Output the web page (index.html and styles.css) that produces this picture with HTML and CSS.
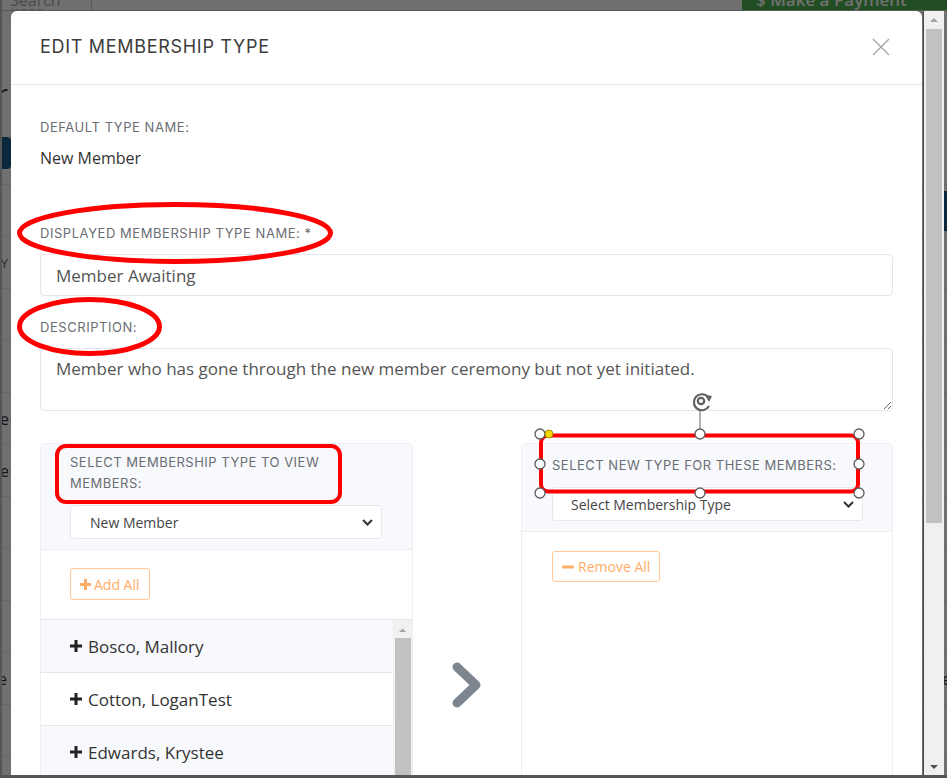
FILE: index.html
```
<!DOCTYPE html>
<html>
<head>
<meta charset="utf-8">
<link rel="stylesheet" href="styles.css">
</head>
<body>
<div class="screen">
  <div class="page">
    <div class="page-top">
      <div class="search">Search user</div>
      <div class="page-top-fill"></div>
      <div class="pay">$ Make a Payment</div>
    </div>
    <div class="page-row page-row-title"><span class="page-cell page-title">Member</span></div>
    <div class="page-row page-row-btn"><span class="page-btn"></span></div>
    <div class="page-row"><span></span><span class="page-blue"></span></div>
    <div class="page-row"><span class="page-cell page-cell-sm">TY</span></div>
    <div class="page-row"></div>
    <div class="page-row"></div>
    <div class="page-row"><span class="page-cell">Type</span></div>
    <div class="page-row"><span class="page-cell">Type</span></div>
    <div class="page-row"></div>
    <div class="page-row"></div>
    <div class="page-row"></div>
    <div class="page-row"><span class="page-cell page-cell-e">Active</span><span class="page-cell-r">e</span></div>
    <div class="page-row"></div>
  </div>
  <div class="backdrop"></div>

  <div class="modal">
    <div class="modal-header">
      <h2 class="modal-title">EDIT MEMBERSHIP TYPE</h2>
      <svg class="close" width="18" height="18" viewBox="0 0 18 18"><path d="M1 1 L17 17 M17 1 L1 17" stroke="#a4a4a4" stroke-width="1.3" fill="none"/></svg>
    </div>
    <div class="modal-body">
      <div class="label">DEFAULT TYPE NAME:</div>
      <div class="value">New Member</div>

      <div class="label label-field">DISPLAYED MEMBERSHIP TYPE NAME: *</div>
      <input class="field" type="text" value="Member Awaiting">

      <div class="label label-field label-desc">DESCRIPTION:</div>
      <textarea class="field area">Member who has gone through the new member ceremony but not yet initiated.</textarea>

      <div class="transfer">
        <div class="panel">
          <div class="panel-head">
            <div class="plabel">SELECT MEMBERSHIP TYPE TO VIEW MEMBERS:</div>
            <div class="select"><span>New Member</span><svg width="11" height="7" viewBox="0 0 11 7"><path d="M1 1 L5.5 5.5 L10 1" stroke="#333" stroke-width="2" fill="none"/></svg></div>
          </div>
          <div class="panel-actions">
            <div class="obtn"><svg width="11" height="11" viewBox="0 0 11 11"><path d="M4 0h3v4h4v3H7v4H4V7H0V4h4z" fill="#ffad66"/></svg>Add All</div>
          </div>
          <div class="list">
            <div class="items">
              <div class="item alt"><svg width="12" height="12" viewBox="0 0 12 12"><path d="M4.5 0h3v4.5H12v3H7.5V12h-3V7.5H0v-3h4.5z" fill="#222"/></svg>Bosco, Mallory</div>
              <div class="item"><svg width="12" height="12" viewBox="0 0 12 12"><path d="M4.5 0h3v4.5H12v3H7.5V12h-3V7.5H0v-3h4.5z" fill="#222"/></svg>Cotton, LoganTest</div>
              <div class="item alt"><svg width="12" height="12" viewBox="0 0 12 12"><path d="M4.5 0h3v4.5H12v3H7.5V12h-3V7.5H0v-3h4.5z" fill="#222"/></svg>Edwards, Krystee</div>
              <div class="item"><svg width="12" height="12" viewBox="0 0 12 12"><path d="M4.5 0h3v4.5H12v3H7.5V12h-3V7.5H0v-3h4.5z" fill="#222"/></svg>Fields, Jordan</div>
            </div>
            <div class="lscroll">
              <svg class="arr" width="19" height="10" viewBox="0 0 19 10"><path d="M6 7 L9.5 3.5 L13 7z" fill="#a3a3a3"/></svg>
              <div class="lthumb"></div>
            </div>
          </div>
        </div>

        <div class="mid">
          <svg width="40" height="52" viewBox="0 0 40 52"><path d="M10 8 L29 26 L10 44" stroke="#7d868e" stroke-width="9" stroke-linecap="round" stroke-linejoin="round" fill="none"/></svg>
        </div>

        <div class="panel">
          <div class="panel-head panel-head-right">
            <div class="plabel nowrap">SELECT NEW TYPE FOR THESE MEMBERS:</div>
            <div class="select select-right"><span>Select Membership Type</span><svg width="11" height="7" viewBox="0 0 11 7"><path d="M1 1 L5.5 5.5 L10 1" stroke="#333" stroke-width="2" fill="none"/></svg></div>
          </div>
          <div class="panel-actions panel-actions-right">
            <div class="obtn obtn-rm"><svg width="12" height="4" viewBox="0 0 12 4"><rect x="0" y="0.5" width="12" height="3" rx="1" fill="#ffad66"/></svg>Remove All</div>
          </div>
        </div>
      </div>
    </div>
  </div>

  <div class="vscroll">
    <svg class="varr" width="18" height="18" viewBox="0 0 18 18"><path d="M5 11 L9 7 L13 11z" fill="#a3a3a3"/></svg>
    <div class="vthumb"></div>
    <div class="vfill"></div>
    <svg class="varr" width="18" height="18" viewBox="0 0 18 18"><path d="M5 7 L9 11 L13 7z" fill="#505050"/></svg>
  </div>

  <svg class="annot" width="947" height="778" viewBox="0 0 947 778">
    <ellipse cx="175" cy="233" rx="155.5" ry="28.5" fill="none" stroke="#f00" stroke-width="5"/>
    <ellipse cx="89.5" cy="326.5" rx="70" ry="27" fill="none" stroke="#f00" stroke-width="5"/>
    <rect x="57" y="446" width="283" height="56" rx="9" fill="none" stroke="#f00" stroke-width="4"/>
    <rect x="541" y="435.5" width="317" height="56" rx="7" fill="none" stroke="#f00" stroke-width="4"/>
    <line x1="700" y1="410" x2="700" y2="434" stroke="#666" stroke-width="1"/>
    <g fill="none" stroke="#606060" stroke-width="2.2">
      <path d="M708 397 A8 8 0 1 0 709 406"/>
      <circle cx="701" cy="401" r="3.2"/>
    </g>
    <path d="M705 395 L712 396 L709 402z" fill="#606060"/>
    <g fill="#fff" stroke="#5c5c5c" stroke-width="1.3">
      <circle cx="540" cy="434" r="5"/>
      <circle cx="700" cy="434" r="5"/>
      <circle cx="859" cy="434" r="5"/>
      <circle cx="540" cy="464" r="5"/>
      <circle cx="859" cy="464" r="5"/>
      <circle cx="540" cy="493" r="5"/>
      <circle cx="700" cy="493" r="5"/>
      <circle cx="859" cy="493" r="5"/>
    </g>
    <circle cx="549" cy="434" r="4" fill="#f5d800" stroke="#8a7a00" stroke-width="0.8"/>
  </svg>
</div>
</body>
</html>
```
FILE: styles.css
```
* { box-sizing: border-box; }
html, body { margin: 0; padding: 0; }
body { font-family: "Open Sans", "Liberation Sans", sans-serif; background: #fff; }

.screen {
  position: relative;
  width: 947px;
  height: 778px;
  overflow: hidden;
  background: #fff;
}
.screen::after {
  content: "";
  position: absolute;
  inset: 0;
  border-left: 2px solid #555;
  border-bottom: 3px solid #555;
  pointer-events: none;
}

/* underlying page */
.page { display: flex; flex-direction: column; }
.page-top {
  display: flex;
  height: 11px;
  overflow: hidden;
  border-bottom: 1px solid #ccc;
  flex: none;
}
.search {
  width: 92px;
  border-right: 1px solid #ccc;
  color: #aaa;
  font-size: 16px;
  line-height: 12px;
  padding-left: 10px;
  margin-top: -6px;
}
.page-top-fill { flex: 1; }
.pay {
  width: 205px;
  background: #4caf50;
  color: #fff;
  font-size: 17px;
  line-height: 14px;
  margin-top: -7px;
  padding-left: 14px;
  font-weight: 600;
}
.page-row {
  height: 52px;
  flex: none;
  border-bottom: 1px solid #e4e4e4;
  display: flex;
  align-items: center;
  justify-content: space-between;
  font-size: 16px;
  color: #333;
}
.page-row-title { height: 110px; border-bottom-color: #fff; align-items: flex-end; padding-bottom: 8px; }
.page-row-btn { height: 64px; }
.page-cell {
  display: inline-block;
  width: 200px;
  text-align: right;
  margin-left: -191px;
}
.page-title { font-size: 28px; margin-left: -192px; }
.page-btn { width: 30px; height: 32px; background: #1d5b8c; border-radius: 4px; margin-left: -19px; }
.page-blue { width: 10px; height: 40px; background: #1d5b8c; margin-right: -4px; }
.page-cell-sm { font-size: 13px; color: #666; margin-left: -192px; }
.page-cell-e { margin-left: -193px; }
.page-cell-r { margin-right: -4px; }

.backdrop {
  position: absolute;
  inset: 0;
  background: rgba(0, 0, 0, 0.56);
}

/* modal */
.modal {
  position: absolute;
  left: 11px;
  top: 11px;
  width: 911px;
  height: 800px;
  background: #fff;
  border-radius: 6px 6px 0 0;
}
.modal-header {
  height: 74px;
  border-bottom: 1px solid #e6e6e6;
  display: flex;
  align-items: center;
  justify-content: space-between;
  padding: 0 32px 2px 29px;
}
.modal-title {
  margin: 0;
  font-family: "Inter", "Liberation Sans", sans-serif;
  font-weight: 400;
  font-size: 18px;
  color: #3c3c3c;
  letter-spacing: 0.7px;
}
.close { display: block; }

.modal-body { padding: 33px 29px 0; }
.label {
  font-family: "Inter", "Liberation Sans", sans-serif;
  font-size: 13px;
  line-height: 18px;
  color: #6a6d73;
  letter-spacing: 0.55px;
}
.value {
  font-size: 16px;
  line-height: 22px;
  color: #333;
  margin-top: 11px;
}
.label-field { margin-top: 55px; margin-bottom: 12px; }
.label-desc { margin-top: 22px; }
.field {
  display: block;
  width: 100%;
  height: 42px;
  border: 1px solid #e3e6ed;
  border-radius: 4px;
  padding: 0 15px;
  font-family: "Open Sans", sans-serif;
  font-size: 17px;
  color: #555;
  background: #fff;
  outline: none;
}
.area {
  height: 63px;
  padding: 8px 15px;
  line-height: 24px;
  resize: vertical;
}

.transfer {
  display: grid;
  grid-template-columns: 373px 108px 372px;
  margin-top: 32px;
}
.panel {
  border: 1px solid #edeff3;
  border-radius: 4px 4px 0 0;
  height: 400px;
}
.panel-head {
  background: #f7f9fc;
  padding: 8px 30px 10px 29px;
  border-bottom: 1px solid #eceef1;
}
.panel-head-right { padding: 11px 29px 10px 30px; }
.plabel {
  font-family: "Inter", "Liberation Sans", sans-serif;
  font-size: 13px;
  line-height: 21px;
  color: #6a6d73;
  letter-spacing: 0.5px;
}
.nowrap { white-space: nowrap; }
.select {
  margin-top: 11px;
  height: 34px;
  background: #fff;
  border: 1px solid #e6e8ee;
  border-radius: 3px;
  display: flex;
  align-items: center;
  justify-content: space-between;
  padding: 0 8px 0 19px;
  font-size: 14px;
  color: #444;
}
.select-right { padding-left: 18px; }
.select svg { display: block; }

.panel-actions {
  padding: 18px 29px 19px;
  border-bottom: 1px solid #e4e6ea;
  display: flex;
}
.panel-actions-right { border-bottom: 0; padding: 19px 30px; }
.obtn {
  height: 32px;
  border: 1px solid #ffc896;
  border-radius: 3px;
  color: #ffad66;
  font-size: 14px;
  display: flex;
  align-items: center;
  gap: 3px;
  padding: 0 9px 0 9px;
}
.obtn-rm { gap: 4px; padding: 0 9px 0 9px; height: 31px; }

.list { display: flex; }
.items { width: 352px; }
.item {
  height: 53px;
  border-bottom: 1px solid #e4e6ea;
  display: flex;
  align-items: center;
  gap: 6px;
  padding-left: 29px;
  font-size: 17px;
  color: #333;
  background: #fff;
}
.item.alt { background: #f7f9fc; }
.lscroll {
  width: 19px;
  background: #f1f1f1;
  display: flex;
  flex-direction: column;
  align-items: center;
}
.arr { display: block; margin-top: 5px; }
.lthumb { width: 16px; flex: 1; background: #c1c1c1; margin-top: 3px; }

.mid {
  display: flex;
  justify-content: center;
  padding-top: 216px;
}
.mid svg { display: block; }

.vscroll {
  position: absolute;
  left: 923px;
  top: 11px;
  width: 21px;
  height: 765px;
  background: #f0f0f0;
  border-left: 1px solid #4a4a4a;
  display: flex;
  flex-direction: column;
  align-items: center;
}
.varr { display: block; flex: none; }
.vthumb { width: 16px; height: 494px; background: #c1c1c1; flex: none; }
.vfill { flex: 1; }

.annot { position: absolute; left: 0; top: 0; pointer-events: none; }
```
